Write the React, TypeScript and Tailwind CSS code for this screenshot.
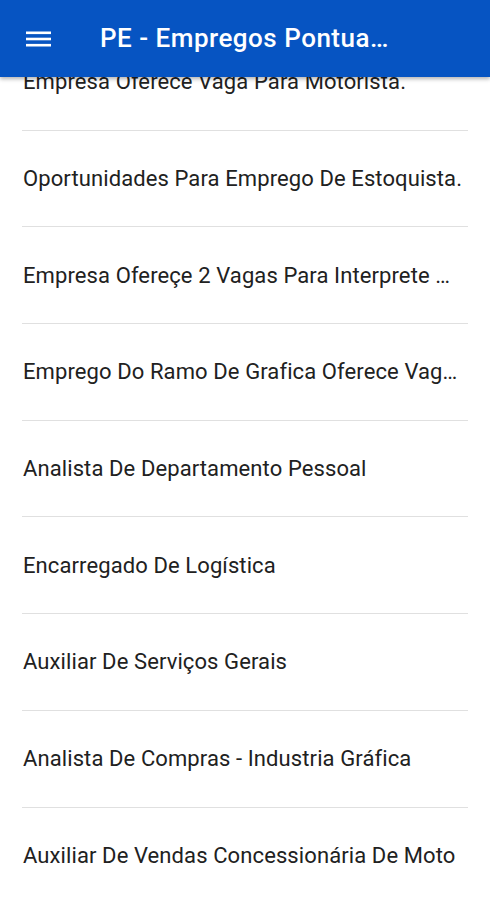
const jobs = [
  'Empresa Oferece Vaga Para Motorista.',
  'Oportunidades Para Emprego De Estoquista.',
  'Empresa Ofereçe 2 Vagas Para Interprete De Libras',
  'Emprego Do Ramo De Grafica Oferece Vagas Para Impressor',
  'Analista De Departamento Pessoal',
  'Encarregado De Logística',
  'Auxiliar De Serviços Gerais',
  'Analista De Compras - Industria Gráfica',
  'Auxiliar De Vendas Concessionária De Moto',
];

export default function App() {
  return (
    <div className="relative h-[900px] w-[490px] overflow-hidden bg-white font-['Roboto',sans-serif]">
      <header className="absolute inset-x-0 top-0 z-10 flex h-[77px] items-center bg-[#0654c2] shadow-[0_2px_4px_rgba(0,0,0,0.3)]">
        <svg width="25" height="16" viewBox="0 0 25 16" className="ml-[26px]">
          <rect x="0" y="0.5" width="25" height="2.6" fill="white" />
          <rect x="0" y="6.7" width="25" height="2.6" fill="white" />
          <rect x="0" y="12.9" width="25" height="2.6" fill="white" />
        </svg>
        <h1 className="ml-[49px] max-w-[290px] truncate text-[26px] font-medium tracking-[0.5px] text-white">
          PE - Empregos Pontuais Pernambuco
        </h1>
      </header>

      <ul className="mt-[34px] px-[22px]">
        {jobs.map((job) => (
          <li key={job} className="flex h-[96.7px] items-center border-b border-[#e0e0e0]">
            <span className="max-w-[441px] truncate pl-px text-[22px] tracking-[0.1px] text-[#212121]">{job}</span>
          </li>
        ))}
      </ul>
    </div>
  );
}
